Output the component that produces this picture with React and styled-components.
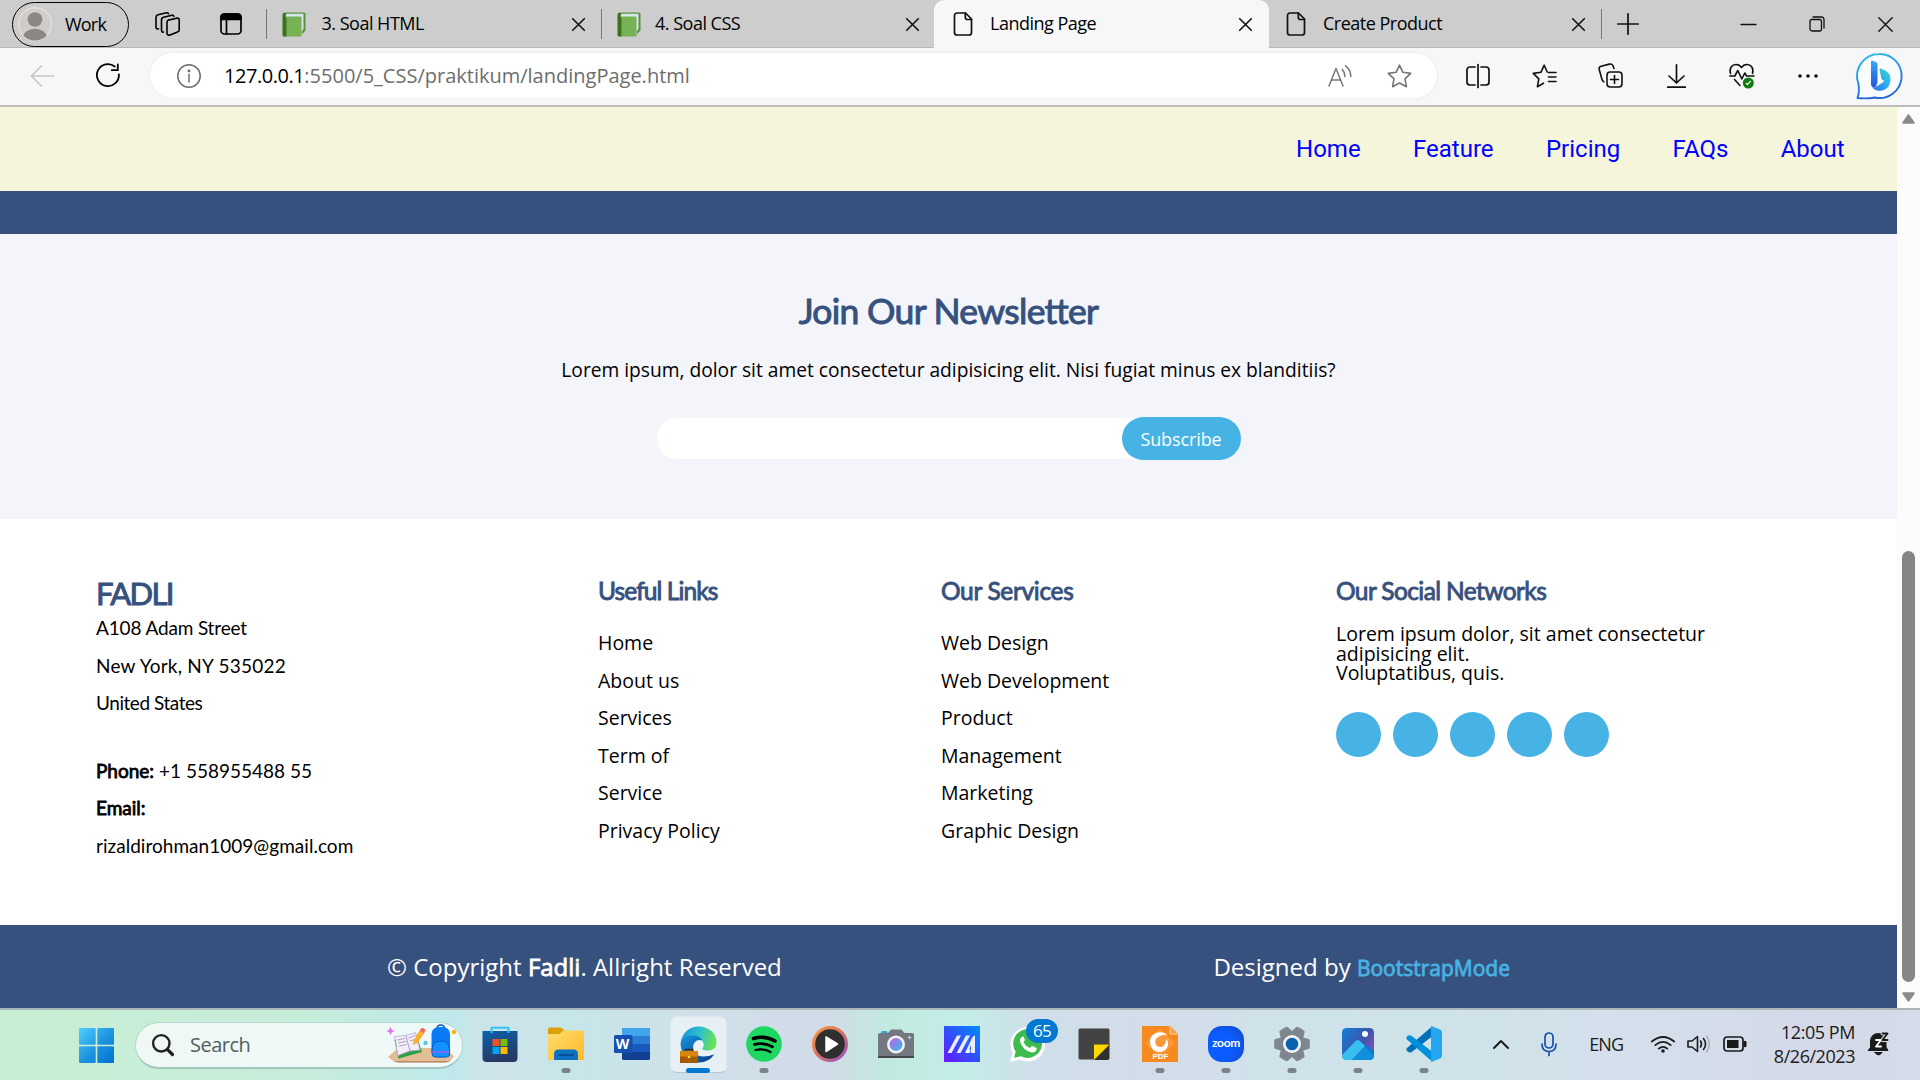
import React from 'react';
import styled, { createGlobalStyle, css } from 'styled-components';

const GlobalStyle = createGlobalStyle`
  * { box-sizing: border-box; }
  html, body { margin: 0; padding: 0; overflow: hidden; }
  ul, h1, h2, h3, p { margin: 0; padding: 0; list-style: none; font-weight: 400; }
`;

const UI = '"Open Sans", "Noto Sans", sans-serif';
const BODY = '"Open Sans", "Noto Sans", sans-serif';
const GEO = 'Lato, "Open Sans", sans-serif';
const NAVY = '#37517e';
const SKY = '#47b2e4';

const Screen = styled.div`
  display: flex;
  flex-direction: column;
  width: 1920px;
  height: 1080px;
  overflow: hidden;
  font-family: ${UI};
  background: #fff;
  color: #000;
`;

const Icon = styled.svg`
  display: block;
  flex: none;
  overflow: visible;
  fill: none;
  stroke: ${(p) => p.$stroke || 'none'};
  stroke-width: ${(p) => p.$weight || 1.5};
  stroke-linecap: round;
  stroke-linejoin: round;
`;

/* ---------- browser chrome ---------- */

const TabStrip = styled.header`
  display: flex;
  align-items: center;
  flex: none;
  height: 48px;
  padding-left: 12px;
  background: #cdcdcd;
  box-shadow: inset 0 -1px 0 #b9b9b9;
`;

const ProfilePill = styled.div`
  display: flex;
  align-items: center;
  gap: 13px;
  width: 117px;
  height: 45px;
  padding-left: 5px;
  border: 1.5px solid #000;
  border-radius: 23px;
  font-size: 18px;
  letter-spacing: -0.8px;
`;

const StripIcons = styled.div`
  display: flex;
  align-items: center;
  gap: 40px;
  padding: 0 24px 0 26px;
`;

const Divider = styled.span`
  flex: none;
  width: 1px;
  height: 30px;
  background: #767676;
`;

const Tab = styled.div`
  display: flex;
  align-items: center;
  flex: none;
  width: ${(p) => p.$w}px;
  height: 48px;
  padding: 0 ${(p) => p.$pr}px 0 ${(p) => p.$pl}px;
  ${(p) =>
    p.$active &&
    css`
      background: #f7f7f7;
      border-radius: 10px 10px 0 0;
    `}
`;

const TabTitle = styled.span`
  flex: 1;
  padding: 0 0 2px ${(p) => p.$gap || 16}px;
  font-size: 18px;
  line-height: 24px;
  letter-spacing: -0.5px;
  white-space: nowrap;
`;

const NewTab = styled.div`
  padding: 0 0 1px 15px;
`;

const WindowControls = styled.div`
  display: flex;
  align-items: center;
  gap: 53px;
  margin-left: auto;
  padding-right: 27px;
`;

const Toolbar = styled.div`
  display: flex;
  align-items: center;
  flex: none;
  height: 59px;
  padding: 0 18px 2px 30px;
  background: #f7f7f7;
  border-bottom: 2px solid #bdbdbd;
`;

const NavButtons = styled.div`
  display: flex;
  align-items: center;
  gap: 42px;
  padding-right: 30px;
`;

const AddressBar = styled.div`
  display: flex;
  align-items: center;
  width: 1287px;
  height: 45px;
  padding: 0 25px 0 27px;
  background: #fff;
  border-radius: 23px;
  box-shadow: 0 0 3px rgba(0, 0, 0, 0.08);
`;

const Url = styled.span`
  flex: 1;
  padding: 1px 0 0 23px;
  font-size: 20px;
  line-height: 28px;
  color: #6d6d6d;
`;

const Host = styled.span`
  color: #000;
  letter-spacing: -0.45px;
`;

const AddressActions = styled.div`
  display: flex;
  align-items: center;
  gap: 35px;
`;

const ToolbarActions = styled.div`
  display: grid;
  grid-template-columns: repeat(6, 66px) 1fr;
  align-items: center;
  justify-items: center;
  flex: 1;
  padding-left: 8px;

  & > :last-child { justify-self: end; }
`;

/* ---------- page ---------- */

const Viewport = styled.div`
  display: flex;
  flex: none;
  height: 901px;
`;

const Page = styled.main`
  display: flex;
  flex-direction: column;
  width: 1897px;
`;

const Scrollbar = styled.aside`
  display: flex;
  flex-direction: column;
  align-items: center;
  width: 23px;
  padding-top: 7px;
  background: #fcfcfc;
`;

const Thumb = styled.div`
  width: 13px;
  height: 431px;
  margin: 427px 0 10px;
  border-radius: 7px;
  background: #858585;
`;

const NavBar = styled.nav`
  display: flex;
  align-items: center;
  justify-content: flex-end;
  gap: 52.4px;
  flex: none;
  height: 84px;
  padding-right: 52.4px;
  background: #f5f5dc;
  font-family: Roboto, sans-serif;
`;

const NavLink = styled.a`
  color: #0000ff;
  font-size: 24px;
`;

const HeroEdge = styled.div`
  flex: none;
  height: 43px;
  background: ${NAVY};
`;

const Newsletter = styled.section`
  display: flex;
  flex-direction: column;
  align-items: center;
  flex: none;
  height: 285px;
  padding-top: 52.7px;
  background: #f3f5fa;
`;

const NewsTitle = styled.h2`
  font-family: ${GEO};
  font-size: 35.5px;
  line-height: 48px;
  letter-spacing: -0.7px;
  font-feature-settings: 'liga' 1;
  color: ${NAVY};
  -webkit-text-stroke: 1px ${NAVY};
`;

const NewsText = styled.p`
  margin-top: 22.8px;
  font-family: ${BODY};
  font-size: 19.2px;
  line-height: 26px;
`;

const SubscribeForm = styled.div`
  display: flex;
  align-items: center;
  justify-content: flex-end;
  width: 584px;
  height: 41px;
  margin-top: 35px;
  border-radius: 21px;
  background: #fff;
`;

const SubscribeButton = styled.button`
  flex: none;
  width: 119px;
  height: 43px;
  margin: -1px 0;
  padding: 1px 0 0;
  border: 0;
  border-radius: 22px;
  background: ${SKY};
  color: #fff;
  font-family: ${BODY};
  font-size: 18px;
  letter-spacing: -0.1px;
`;

const Footer = styled.section`
  display: grid;
  grid-template-columns: 502px 343px 395px 1fr;
  flex: none;
  height: 406px;
  padding: 56px 0 0 96px;
`;

const Brand = styled.h1`
  margin-top: 3px;
  font-family: ${GEO};
  font-size: 31px;
  line-height: 31px;
  letter-spacing: -1.6px;
  color: ${NAVY};
  -webkit-text-stroke: 1px ${NAVY};
`;

const Address = styled.div`
  font-family: ${GEO};
  font-size: 19px;
  line-height: 37.5px;
`;

const AddressLine = styled.p`
  margin-top: ${(p) => (p.$spaced ? 30 : 0)}px;
  letter-spacing: ${(p) => p.$ls || 0}px;
`;

const Strong = styled.span`
  -webkit-text-stroke: 0.8px currentColor;
`;

const ColumnTitle = styled.h3`
  margin: 0.7px 0 18.4px;
  font-family: ${GEO};
  font-size: 24.5px;
  line-height: 30px;
  letter-spacing: ${(p) => p.$ls || -0.4}px;
  color: ${NAVY};
  -webkit-text-stroke: 0.9px ${NAVY};
`;

const LinkList = styled.ul`
  font-family: ${BODY};
  font-size: 19.5px;
  line-height: 37.5px;
`;

const SocialText = styled.p`
  font-family: ${BODY};
  font-size: 19.5px;
  line-height: 19.5px;
`;

const SocialRow = styled.div`
  display: flex;
  gap: 12px;
  margin-top: 29.4px;
`;

const SocialDot = styled.span`
  width: 45px;
  height: 45px;
  border-radius: 50%;
  background: ${SKY};
`;

const CopyrightBar = styled.footer`
  display: flex;
  align-items: center;
  justify-content: space-between;
  flex: 1;
  padding: 0 387px;
  background: ${NAVY};
  color: #fff;
  font-family: ${BODY};
  font-size: 24px;
`;

const Designer = styled.span`
  color: ${SKY};
  font-size: 21px;
  -webkit-text-stroke: 0.8px currentColor;
`;

/* ---------- taskbar ---------- */

const Taskbar = styled.footer`
  display: flex;
  align-items: center;
  flex: 1;
  border-top: 2px solid #a9b6ba;
  background: linear-gradient(
    90deg,
    #c8efd3 0px, #c6ecda 300px, #bfe9eb 450px, #cee3e9 490px, #c6e6e8 570px,
    #d0dfe9 700px, #d0dce7 830px, #c1eadf 890px, #c3ede8 960px, #cfdfe9 1030px,
    #d4dce9 1160px, #cfe2ea 1270px, #cee3e8 1440px, #d5dfec 1640px, #d3d9e8 1800px, #d6dbe9 1920px
  );
`;

const StartButton = styled.div`
  padding: 0 21px 0 79px;
`;

const SearchBox = styled.div`
  display: flex;
  align-items: center;
  width: 328px;
  height: 47px;
  padding: 0 6px 0 16px;
  border: 1.5px solid #b4d8cf;
  border-bottom: 2px solid #a3c6bd;
  border-radius: 24px;
  background: linear-gradient(90deg, #eff8f3, #eefafa);
`;

const SearchLabel = styled.span`
  flex: 1;
  padding-left: 16px;
  font-size: 20px;
  letter-spacing: -0.5px;
  color: #565d5b;
`;

const AppRow = styled.div`
  display: flex;
  padding-left: 4px;
`;

const AppCell = styled.div`
  position: relative;
  display: flex;
  justify-content: center;
  align-items: center;
  width: 66px;
  height: 68px;
  padding-bottom: 2px;
`;

const ActivePlate = styled.div`
  display: flex;
  justify-content: center;
  align-items: center;
  width: 57px;
  height: 57px;
  border: 1px solid #dde7ec;
  border-bottom-color: #b9c6cc;
  border-radius: 7px;
  background: #e7f0f5;
`;

const Indicator = styled.span`
  position: absolute;
  left: 50%;
  bottom: 6px;
  width: ${(p) => (p.$active ? 24 : 9)}px;
  height: 5px;
  border-radius: 3px;
  transform: translateX(-50%);
  background: ${(p) => (p.$active ? '#0078d4' : '#7b8389')};
`;

const Badge = styled.span`
  position: absolute;
  left: 31px;
  top: 8px;
  width: 32px;
  height: 24px;
  border-radius: 12px;
  background: #0078d4;
  color: #fff;
  font-size: 17px;
  line-height: 23px;
  letter-spacing: -0.8px;
  text-align: center;
`;

const ZoomTile = styled.div`
  width: 36px;
  height: 36px;
  border-radius: 14px;
  background: radial-gradient(circle at 35% 55%, #0b5cff 40%, #1349c4 100%);
  color: #fff;
  font-family: ${GEO};
  font-size: 12px;
  font-weight: 700;
  line-height: 34px;
  letter-spacing: -0.3px;
  text-align: center;
`;

const WordLetter = styled.text`
  font: 700 14px ${UI};
  fill: #fff;
`;

const PdfLabel = styled.text`
  font: 700 8px "Liberation Sans", sans-serif;
  fill: #fff;
`;

const Tray = styled.div`
  display: flex;
  align-items: center;
  margin-left: auto;
  padding: 0 31px 2px 0;
  color: #1b1b1b;
  font-size: 18px;
`;

const TrayItem = styled.div`
  padding-left: ${(p) => p.$gap}px;
  letter-spacing: -1px;
`;

const Clock = styled.div`
  display: flex;
  flex-direction: column;
  align-items: flex-end;
  width: 121px;
  padding-right: 13px;
  padding-bottom: 1px;
  line-height: 24px;
  letter-spacing: -0.45px;
`;

/* ---------- icon drawings ---------- */

const Avatar = () => (
  <Icon width="34" height="34" viewBox="0 0 34 34">
    <clipPath id="av"><circle cx="17" cy="17" r="16.5" /></clipPath>
    <circle cx="17" cy="17" r="16.3" fill="#cfccc9" stroke="#e3e0dc" />
    <g clipPath="url(#av)" fill="#8b8784">
      <circle cx="17" cy="12.5" r="7.3" />
      <ellipse cx="17" cy="31" rx="12.2" ry="9.3" />
    </g>
  </Icon>
);
const Workspaces = () => (
  <Icon $stroke="#000" $weight={1.6} width="25" height="24" viewBox="0 0 25 24">
    <path d="M13 8.2 22 6.1Q24.2 5.600 24.2 7.800V18Q24.200 19.600 22.500 20L15 22.900Q12 23.900 12 21V10.500Q12 8.500 13.500 8.100Z" />
    <path d="M8.500 20Q6.500 20.500 6.500 18V8Q6.500 5.700 8.500 5.200L17 3.200Q18.500 3 18.800 4.200" />
    <path d="M3.500 16.800Q1 17.500 1 15V5.500Q1 3.300 3 2.800L11.500.8Q13 .5 13.500 1.700" />
  </Icon>
);
const VerticalTabs = () => (
  <Icon $stroke="#000" $weight={1.7} width="22" height="22" viewBox="0 0 22 22">
    <rect x="1" y="1" width="20" height="20" rx="3.500" />
    <path d="M1 6.500V4a3 3 0 0 1 3-3h14a3 3 0 0 1 3 3v2.500Z" fill="#000" />
    <path d="M6.500 7v14" />
  </Icon>
);
const Book = () => (
  <Icon width="24" height="25" viewBox="0 0 24 25">
    <path d="M4 .5h18a1.500 1.500 0 0 1 1.500 1.500v16.500L20 22V5H1Z" fill="#5c913b" />
    <path d="M4.500 1.800h17v15L19.500 20V5H3Z" fill="#d6e6ef" />
    <rect x="1" y="4.600" width="18.500" height="19.900" rx="1.200" fill="#77b255" />
    <path d="M2.500.5C1.200.7.500 2 .500 3.500V23A1.500 1.500 0 0 0 2 24.500h2.500V6C3 4.500 3 3 4.500 1.800Z" fill="#3e721d" />
  </Icon>
);
const FileIcon = () => (
  <Icon $stroke="#111" $weight={1.7} width="24" height="24" viewBox="0 0 24 24">
    <path d="M6 1h8.500l6 6v13.500a2.500 2.500 0 0 1-2.500 2.500H6a2.500 2.500 0 0 1-2.500-2.500v-17A2.500 2.500 0 0 1 6 1Z" />
    <path d="M14.300 1v4.500a2 2 0 0 0 2 2h4.200" />
  </Icon>
);
const Cross = ({ size = 13, weight = 1.6 }) => (
  <Icon $stroke="#111" $weight={weight} width={size} height={size} viewBox="0 0 13 13">
    <path d="M.7.7l11.600 11.600M12.300.7.7 12.300" />
  </Icon>
);
const Plus = () => (
  <Icon $stroke="#111" $weight={1.7} width="22" height="22" viewBox="0 0 22 22"><path d="M11 .8v20.400M.8 11h20.400" /></Icon>
);
const Minimize = () => (
  <Icon $stroke="#111" $weight={1.4} width="15" height="15" viewBox="0 0 15 15"><path d="M0 7.500h15" /></Icon>
);
const Restore = () => (
  <Icon $stroke="#111" $weight={1.3} width="16" height="16" viewBox="0 0 16 16">
    <rect x="1" y="3.500" width="11.500" height="11.500" rx="2" />
    <path d="M4 1h8.500A2.500 2.500 0 0 1 15 3.500V12" />
  </Icon>
);
const Back = () => (
  <Icon $stroke="#c6c6c6" $weight={1.6} width="24" height="22" viewBox="0 0 24 22"><path d="M11.500 1 1.300 11l10.200 10M1.500 11h22" /></Icon>
);
const Reload = () => (
  <Icon $stroke="#000" $weight={1.8} width="24" height="24" viewBox="0 0 24 24">
    <path d="M18.800 2.500A11 11 0 1 0 22.900 10.500" /><path d="M21.800.5v5.700h-6" />
  </Icon>
);
const Info = () => (
  <Icon $stroke="#6b6b6b" $weight={1.5} width="24" height="24" viewBox="0 0 24 24">
    <circle cx="12" cy="12" r="11.200" /><path d="M12 10.500V18" /><circle cx="12" cy="7" r=".7" fill="#6b6b6b" />
  </Icon>
);
const ReadAloud = () => (
  <Icon $stroke="#767676" $weight={1.5} width="24" height="22" viewBox="0 0 24 22">
    <path d="M1 21 8 3.500 15 21M3.500 15h9" />
    <path d="M14.200 4.500Q17 7.500 16.800 11.500M17.500.8Q22.700 4.500 22.800 11.500" />
  </Icon>
);
const Star = () => (
  <Icon $stroke="#767676" $weight={1.6} width="25" height="24" viewBox="0 0 25 24">
    <path d="M12.500 1.200 15.900 8.300 23.700 9.400 18 14.900 19.400 22.700 12.500 19 5.600 22.700 7 14.900 1.300 9.400 9.100 8.300Z" />
  </Icon>
);
const Split = () => (
  <Icon $stroke="#111" $weight={1.7} width="24" height="24" viewBox="0 0 24 24">
    <path d="M12 .5v23M9 3H4a3 3 0 0 0-3 3v12a3 3 0 0 0 3 3h5M15 3h5a3 3 0 0 1 3 3v12a3 3 0 0 1-3 3h-5" />
  </Icon>
);
const Favorites = () => (
  <Icon $stroke="#111" $weight={1.6} width="25" height="24" viewBox="0 0 25 24">
    <path d="M16.500 8.500H24M16.500 13H24M16.500 17.500H24" />
    <path d="M15.200 8 12.200 1.200 8.900 8.300 1.300 9.400 6.800 14.900 5.400 22.700 11.500 19.200" />
  </Icon>
);
const Collections = () => (
  <Icon $stroke="#111" $weight={1.6} width="25" height="25" viewBox="0 0 25 25">
    <rect x="9" y="9" width="15" height="15" rx="3.200" />
    <path d="M16.500 12.500v8M12.500 16.500h8" />
    <path d="M5.800 18.800Q4.400 18 4 16.500L1.200 6.500Q.6 4 3 3.200L11.500 1.100Q14 .5 15 2.800L16 5.500" />
  </Icon>
);
const Download = () => (
  <Icon $stroke="#111" $weight={1.7} width="25" height="24" viewBox="0 0 25 24"><path d="M12.500.8v17.800M5 12l7.500 7 7.500-7M3.700 23.200h17.600" /></Icon>
);
const Health = () => (
  <Icon $stroke="#111" $weight={1.6} width="26" height="26" viewBox="0 0 26 26">
    <path d="M1.500 10.500C0 5 3 1.500 7 1.500q3.500 0 5.500 3 2-3 5.500-3c4 0 7 3.500 5.500 9M.8 13h5l3-5.500 4 8.500 3-6 1.800 3H25M5.500 16.500l5.500 6" />
    <circle cx="19.300" cy="20" r="5.500" fill="#107c10" stroke="none" />
    <path d="m17.300 20.500 1.200 1.200 2.800-3.400" stroke="#fff" strokeWidth="1.200" />
  </Icon>
);
const Dots = () => (
  <Icon width="22" height="6" viewBox="0 0 22 6">
    <g fill="#111"><circle cx="3" cy="3" r="1.800" /><circle cx="11" cy="3" r="1.800" /><circle cx="19" cy="3" r="1.800" /></g>
  </Icon>
);
const Bing = () => (
  <Icon width="46" height="46" viewBox="0 0 46 46">
    <defs>
      <linearGradient id="bo" x1="0" y1="0" x2="0.300" y2="1"><stop stopColor="#2cc4ea" /><stop offset="1" stopColor="#2566d8" /></linearGradient>
      <linearGradient id="bs" x1="0" y1="0" x2="0" y2="1"><stop stopColor="#3aa8f5" /><stop offset="1" stopColor="#2252dc" /></linearGradient>
      <linearGradient id="bt" x1="1" y1="0" x2="0" y2="1"><stop stopColor="#39e0c4" /><stop offset=".5" stopColor="#2fa6f4" /><stop offset="1" stopColor="#2a6cf0" /></linearGradient>
    </defs>
    <path d="M23 1a22 22 0 1 1-4 43.500Q10 46 1.500 45 4 38 2.200 30A22 22 0 0 1 23 1Z" fill="#f8fcff" stroke="url(#bo)" strokeWidth="1.900" />
    <path d="M23.500 16.500q0-1.500 1.500-1l5 2.500q5 3 4.500 9.500-1 9-10 10.300-6 .5-8.500-4.300 1.500 1.500 4 .2l7.500-4.700q1-.8 0-1.500l-2-1.500Z" fill="url(#bt)" />
    <path d="M15 9q0-1.800 1.700-1.200l3.500 1.500q1.300.7 1.300 2.200V29l-1.500 4.500q-4.500 2-5-2Z" fill="url(#bs)" />
  </Icon>
);
const Triangle = ({ down }) => (
  <Icon $stroke="#8a8a8a" $weight={2} width="13" height="10" viewBox="0 0 13 10">
    <path d={down ? 'M1.200 1.200h10.600L6.500 8.800Z' : 'M1.200 8.800h10.600L6.500 1.200Z'} fill="#8a8a8a" />
  </Icon>
);

const Windows = () => (
  <Icon width="35" height="35" viewBox="0 0 35 35">
    <linearGradient id="wn" gradientUnits="userSpaceOnUse" x1="0" y1="0" x2="35" y2="35"><stop stopColor="#4fd0ff" /><stop offset=".5" stopColor="#1f97e0" /><stop offset="1" stopColor="#0070d2" /></linearGradient>
    <g fill="url(#wn)"><rect width="16.700" height="16.700" rx="1" /><rect x="18.300" width="16.700" height="16.700" rx="1" /><rect y="18.300" width="16.700" height="16.700" rx="1" /><rect x="18.300" y="18.300" width="16.700" height="16.700" rx="1" /></g>
  </Icon>
);
const Magnifier = () => (
  <Icon $stroke="#222" $weight={2.400} width="22" height="22" viewBox="0 0 22 22"><circle cx="9.300" cy="9.300" r="8.200" /><path d="m15.300 15.300 5.200 5.200" strokeWidth="3.200" /></Icon>
);
const SchoolArt = () => (
  <Icon width="70" height="37" viewBox="0 0 70 37">
    <path d="M2 31 12 22h46l10 8-4 5.500q-2 1-6 1H12Q8 36.500 6 34Z" fill="#e3bd95" />
    <path d="M8 35h56l-4 1.500H12Z" fill="#b98b66" />
    <path d="m8.500 14 22-5 5.500 17-23.500 6.500Z" fill="#2f9e44" />
    <path d="M9 10.500 20 9.500l9.500-3 4.500 17.500-10.500 1-11.500 4.500Z" fill="#f3eefa" stroke="#b8a9cf" strokeWidth=".8" />
    <path d="m20 10 4 15M11.500 14l7-1.500M12.500 17l7-1.500M13.500 20l7-1.500M23 12l6-2.500M24 15l6-2" stroke="#9a8cb5" strokeWidth=".8" />
    <path d="m27.500 14.500 6-10 4.500 3-6.500 9.500-4.500 2Z" fill="#fbb02d" /><path d="m33.500 4.500 2-2.500q2.500-.5 4 2l-1.500 3.500Z" fill="#f0695a" />
    <path d="m4.500 1 1.300 2.700L8.500 5 5.800 6.300 4.500 9 3.200 6.300.5 5l2.700-1.300Z" fill="#e06ff5" />
    <circle cx="39.500" cy="17" r="2.200" fill="#5ac8e8" /><circle cx="68" cy="6" r="2.200" fill="#ffb300" />
    <path d="M51 3q0-4 3.800-4T58.500 3" stroke="#1457b8" strokeWidth="1.500" />
    <rect x="45.500" y="1" width="18.500" height="30.500" rx="7" fill="#0a7bf5" />
    <path d="M46 24q0-9 8.800-9t8.800 9v4q0 3-3 3H49q-3 0-3-3Z" fill="#1092ff" stroke="#0752c0" strokeWidth=".9" />
    <path d="M46.500 26h16.500" stroke="#a35cf5" strokeWidth="1.500" />
  </Icon>
);
const Store = () => (
  <Icon width="36" height="36" viewBox="0 0 36 36">
    <linearGradient id="st" x1="0" y1="0" x2=".3" y2="1"><stop stopColor="#0c60ab" /><stop offset="1" stopColor="#263a63" /></linearGradient>
    <path d="M.5 5h35v27q0 4-4 4h-27q-4 0-4-4Z" fill="url(#st)" />
    <path d="M9.500 7V1.800h17V7" stroke="#2fc4f4" strokeWidth="2" strokeLinecap="butt" />
    <rect x="10.500" y="13" width="7" height="7" fill="#f25022" /><rect x="18.500" y="13" width="7" height="7" fill="#7fba00" /><rect x="10.500" y="21" width="7" height="7" fill="#00a4ef" /><rect x="18.500" y="21" width="7" height="7" fill="#ffb900" />
  </Icon>
);
const Explorer = () => (
  <Icon width="36" height="34" viewBox="0 0 36 34">
    <linearGradient id="fx" x1="0" y1="0" x2="1" y2="1"><stop stopColor="#ffdc72" /><stop offset="1" stopColor="#fdbb25" /></linearGradient>
    <path d="M0 2q0-1.500 1.500-1.500H12q2 0 3.500 2L17 4v4H0Z" fill="#dda00d" />
    <path d="M0 7h11.500l4-3.500H34.500Q36 3.500 36 5v26.500q0 1.500-1.500 1.500h-33Q0 33 0 31.500Z" fill="url(#fx)" />
    <path d="M6 33v-6q0-4.500 4.500-4.500h15q4.500 0 4.500 4.500v6Z" fill="#0b72c4" /><path d="M11 28h14" stroke="#0a4e94" strokeWidth="2" />
  </Icon>
);
const Word = () => (
  <Icon width="36" height="34" viewBox="0 0 36 34">
    <rect x="8" y="1" width="28" height="32" rx="1.500" fill="#103f91" /><path d="M8 2.500Q8 1 9.500 1h25Q36 1 36 2.500V9H8Z" fill="#41a5ee" /><path d="M8 9h28v8H8Z" fill="#2b7cd3" /><path d="M8 17h28v8H8Z" fill="#185abd" />
    <rect y="8" width="18.500" height="18" rx="1.500" fill="#1450b0" /><WordLetter x="1.800" y="22">W</WordLetter>
  </Icon>
);
const Edge = () => (
  <Icon width="37" height="37" viewBox="0 0 37 37">
    <defs>
      <linearGradient id="e1" x1="0" y1=".3" x2="1" y2=".5"><stop stopColor="#1b8fd6" /><stop offset=".5" stopColor="#2bc0cf" /><stop offset="1" stopColor="#6ee34f" /></linearGradient>
      <linearGradient id="e2" x1="0" y1="0" x2="1" y2="1"><stop stopColor="#1593df" /><stop offset="1" stopColor="#0b3f86" /></linearGradient>
    </defs>
    <path d="M.5 18C1.500 7 9 .5 18.500.5 29 .5 36.500 7.500 36.500 16q0 8.500-8.500 8.500-6.500 0-6-3 2.500-2.500 1-5.500-3-5.500-11-5-8.500 1-11.500 7Z" fill="url(#e1)" />
    <path d="M.5 18Q3 9.500 12 9.500q8 0 10.500 5-5-1.500-8 2-3 4.500 0 9.500 5 8 20 2Q29 36.500 19 36.500 2 36 .500 18Z" fill="url(#e2)" />
    <path d="M22 15q-6 0-7.500 5 0 6 7.500 9 6 2 12.500-1 1-2.500-1.500-2-9 2-11-3 3-3 0-8Z" fill="#eaf4f8" />
    <path d="M5.500 25.500v-2h7v2" stroke="#4a2a08" strokeWidth="1.500" />
    <rect y="25" width="18" height="12" fill="#a55a00" /><path d="M0 25h18v5.500H0Z" fill="#d9860c" /><circle cx="9" cy="31" r="1.300" fill="#ffe04a" />
  </Icon>
);
const Spotify = () => (
  <Icon width="36" height="36" viewBox="0 0 36 36">
    <circle cx="18" cy="18" r="17.800" fill="#1ed760" />
    <g stroke="#000"><path d="M7.500 12.500q11-3.500 21.500 2.500" strokeWidth="3.600" /><path d="M8.500 18.500q9.500-2.500 18 2.300" strokeWidth="2.900" /><path d="M9.500 24q8-2 15 2" strokeWidth="2.300" /></g>
  </Icon>
);
const Media = () => (
  <Icon width="36" height="36" viewBox="0 0 36 36">
    <linearGradient id="mp" x1="0" y1="0" x2="1" y2="1"><stop stopColor="#ff9a3d" /><stop offset=".45" stopColor="#e0745f" /><stop offset="1" stopColor="#8b4fd0" /></linearGradient>
    <circle cx="18" cy="18" r="18" fill="url(#mp)" /><circle cx="18" cy="18" r="14.800" fill="#2f2f2f" /><path d="M14 11v14.500L25.500 18Z" fill="#fff" stroke="#fff" />
  </Icon>
);
const Camera = () => (
  <Icon width="36" height="30" viewBox="0 0 36 30">
    <linearGradient id="cm" x1="0" y1="0" x2="1" y2="1"><stop stopColor="#c95bdf" /><stop offset="1" stopColor="#28c4f5" /></linearGradient>
    <path d="M3 6V3.500Q3 2 4.500 2H8q1.500 0 1.500 1.500V6Z" fill="#27a7e0" />
    <path d="M0 6q0-2 2-2h8l3-3.500h10.500l3 3.500H34q2 0 2 2v23H0Z" fill="#737880" /><path d="M0 27h36v2H0Z" fill="#43474d" />
    <circle cx="18" cy="15.500" r="9" fill="#f3f3f6" /><circle cx="18" cy="15.500" r="6.500" fill="url(#cm)" /><path d="M31.500 7v3M30 8.500h3" stroke="#c8cdd2" strokeWidth="1" />
  </Icon>
);
const MyAsus = () => (
  <Icon width="36" height="36" viewBox="0 0 36 36">
    <linearGradient id="ma" x1="1" y1="0" x2="0" y2="1"><stop stopColor="#008dff" /><stop offset=".5" stopColor="#2d52fb" /><stop offset="1" stopColor="#6a17ff" /></linearGradient>
    <rect width="36" height="36" fill="url(#ma)" />
    <path d="M3.500 27 13 9.500h4L7.500 27ZM12.500 27 22 9.500h4L16.500 27ZM21 27 28 12q1-2.500 3-2.500V27H27V19l-3 8Z" fill="#eeeaff" /><circle cx="24.500" cy="25" r="2" fill="#fff" />
  </Icon>
);
const WhatsApp = () => (
  <Icon width="36" height="36" viewBox="0 0 36 36">
    <path d="M0 36 2.500 26.500A17.300 17.300 0 1 1 9.500 33.500Z" fill="#fff" />
    <path d="m4.200 31.800 1.500-6.200A14.400 14.400 0 1 1 10.800 30.200Z" fill="#3dbb4c" />
    <path d="M12.500 10.500q-3 1.500-2.500 5 2.500 8.500 11.500 11 4 .5 5-3v-1.500l-4.500-2.200-2 2.200q-4.500-1.500-6.500-6l1.500-2-1.500-3.500Z" fill="#fff" />
  </Icon>
);
const Sticky = () => (
  <Icon width="32" height="32" viewBox="0 0 32 32"><path d="M.5 2Q.5.500 2 .500h28q1.500 0 1.500 1.500v14.500L16.500 31.500H2q-1.500 0-1.500-1.500Z" fill="#434343" /><path d="M16 32V16h15.500v14.500L30 32Z" fill="#303030" /><path d="M16 32V16.500h15.500Z" fill="#ffd800" /></Icon>
);
const Foxit = () => (
  <Icon width="36" height="36" viewBox="0 0 36 36">
    <path d="M0 0h28l8 8v28H0Z" fill="#f68a1f" /><path d="M28 0v8h8" fill="#f9a04a" stroke="#fdd3a2" strokeWidth="1" /><path d="m18 3 15 14-15 15L3 17Z" fill="#fba552" opacity=".55" />
    <path d="M25.500 8.500Q21 5.500 15.500 6.500 8 8.500 8 16q.5 8.500 8.500 10Q24 26.500 26 19.500q.5-4-2-6.500.5 5-3.500 7.500-4 1.500-6.500-1.500-2-4.500 1.500-7.500 4-3 10-3Z" fill="#fff" /><PdfLabel x="10.500" y="33">PDF</PdfLabel>
  </Icon>
);
const Settings = () => {
  const teeth = [0, 60, 120, 180, 240, 300];
  return (
    <Icon width="36" height="36" viewBox="0 0 36 36">
      <g fill="#7f878e">
        <circle cx="18" cy="18" r="13.200" />
        {teeth.map((a) => <path key={a} d="M28 11.200 34.500 13q1 .3 1.200 1.500.5 3.500 0 7-.2 1.200-1.200 1.500L28 24.800Z" transform={`rotate(${a} 18 18)`} />)}
      </g>
      <circle cx="18" cy="18" r="9" fill="#f2f4f6" /><circle cx="18" cy="18" r="6.300" fill="#0b63b0" />
    </Icon>
  );
};
const Photos = () => (
  <Icon width="32" height="32" viewBox="0 0 32 32">
    <linearGradient id="ph" x1="0" y1="0" x2="1" y2=".7"><stop stopColor="#1480d8" /><stop offset=".6" stopColor="#3a56b0" /><stop offset="1" stopColor="#8a4fb8" /></linearGradient>
    <clipPath id="pc"><rect width="32" height="32" rx="4.500" /></clipPath>
    <g clipPath="url(#pc)"><rect width="32" height="32" fill="url(#ph)" /><path d="M12 34 23 17.500q1.500-1.500 3 0L34 25v9Z" fill="#1276cf" /><path d="M-2 29 13.500 13q2-2 4.500 0l5 5L8 34H0Z" fill="#35c0ef" /><path d="m8 34 15-15 11 11v4Z" fill="#0e90dc" /></g>
    <circle cx="23" cy="6" r="3" fill="#fff" />
  </Icon>
);
const VsCode = () => (
  <Icon width="36" height="36" viewBox="0 0 36 36">
    <path d="M1 22 26 .5V10.500L5 26.500Q3.500 27 1 25Q-.500 23.500 1 22Z" fill="#0070b8" /><path d="M1 13.500Q-.500 12 1 10.500 3 8.500 5 9.500L26 25.500v10Z" fill="#0090dc" /><path d="M26 .300 34 3.500q2 1 2 3v23q0 2-2 3l-8 3.200Q25 36 25 35V1Q25 0 26 .300Z" fill="#25a6f2" />
  </Icon>
);

const Chevron = () => <Icon $stroke="#1b1b1b" $weight={2} width="16" height="9" viewBox="0 0 16 9"><path d="m1 8 7-7 7 7" /></Icon>;
const Mic = () => <Icon $stroke="#1550a5" $weight={1.700} width="16" height="24" viewBox="0 0 16 24"><rect x="4" y="1" width="8" height="15" rx="4" /><path d="M1 12q0 7.500 7 7.500t7-7.500M8 19.500V23.500" /></Icon>;
const Wifi = () => <Icon $stroke="#1b1b1b" $weight={1.700} width="24" height="17" viewBox="0 0 24 17"><path d="M.8 5.500q11.200-9 22.400 0M4.300 9.200q7.700-6.500 15.400 0M7.700 12.600q4.300-3.600 8.600 0" /><circle cx="12" cy="15" r="1.800" fill="#1b1b1b" stroke="none" /></Icon>;
const Speaker = () => <Icon $stroke="#1b1b1b" $weight={1.600} width="24" height="18" viewBox="0 0 24 18"><path d="M1 6v6h4l5.500 4.500v-15L5 6ZM13.500 6q2 3 0 6M16.500 3.500q4 5.500 0 11" /><path d="M19.500 1q5.500 8 0 16" stroke="#aeb3bd" /></Icon>;
const Battery = () => <Icon $stroke="#1b1b1b" $weight={1.700} width="24" height="16" viewBox="0 0 24 16"><rect x="1" y="1" width="19" height="14" rx="3" /><rect x="4" y="4" width="11.500" height="8" fill="#1b1b1b" stroke="none" /><path d="M22 6.300v3.400" strokeWidth="3" /></Icon>;
const Snooze = () => <Icon $stroke="#1b1b1b" $weight={1} width="21" height="24" viewBox="0 0 21 24"><path d="M2.500 15V9Q3 1.500 10.500 1.500T18 9v6l2 3.500H.5Z" fill="#1b1b1b" /><path d="M7 20.500h7q-3.500 5-7 0Z" fill="#1b1b1b" /><path d="M8 8h5l-5 6.500h5" stroke="#fff" strokeWidth="1.800" /><path d="M14.500 1.500h5l-5 6.500h5" stroke="#d6dbe9" strokeWidth="4" /><path d="M14.500 1.500h5l-5 6.500h5" strokeWidth="1.900" /></Icon>;

/* ---------- data ---------- */

const navLinks = ['Home', 'Feature', 'Pricing', 'FAQs', 'About'];
const usefulLinks = ['Home', 'About us', 'Services', 'Term of', 'Service', 'Privacy Policy'];
const services = ['Web Design', 'Web Development', 'Product', 'Management', 'Marketing', 'Graphic Design'];
const apps = [
  { id: 'store', Art: Store },
  { id: 'explorer', Art: Explorer, open: true },
  { id: 'word', Art: Word },
  { id: 'edge', Art: Edge, active: true },
  { id: 'spotify', Art: Spotify, open: true },
  { id: 'media', Art: Media },
  { id: 'camera', Art: Camera },
  { id: 'myasus', Art: MyAsus },
  { id: 'whatsapp', Art: WhatsApp, badge: '65' },
  { id: 'sticky', Art: Sticky },
  { id: 'foxit', Art: Foxit, open: true },
  { id: 'zoom', Art: () => <ZoomTile>zoom</ZoomTile>, open: true },
  { id: 'settings', Art: Settings, open: true },
  { id: 'photos', Art: Photos, open: true },
  { id: 'vscode', Art: VsCode, open: true },
];

export default function App() {
  return (
    <Screen>
      <GlobalStyle />
      <TabStrip>
        <ProfilePill><Avatar />Work</ProfilePill>
        <StripIcons><Workspaces /><VerticalTabs /></StripIcons>
        <Divider />
        <Tab $w={334} $pl={15} $pr={16}><Book /><TabTitle $gap={15.5}>3. Soal HTML</TabTitle><Cross /></Tab>
        <Divider />
        <Tab $w={332} $pl={15} $pr={15}><Book /><TabTitle $gap={14}>4. Soal CSS</TabTitle><Cross /></Tab>
        <Tab $w={335} $pl={17} $pr={17} $active><FileIcon /><TabTitle $gap={15}>Landing Page</TabTitle><Cross /></Tab>
        <Tab $w={332} $pl={15} $pr={16}><FileIcon /><TabTitle $gap={15}>Create Product</TabTitle><Cross /></Tab>
        <Divider />
        <NewTab><Plus /></NewTab>
        <WindowControls><Minimize /><Restore /><Cross size={15} weight={1.2} /></WindowControls>
      </TabStrip>

      <Toolbar>
        <NavButtons><Back /><Reload /></NavButtons>
        <AddressBar>
          <Info />
          <Url><Host>127.0.0.1</Host>:5500/5_CSS/praktikum/landingPage.html</Url>
          <AddressActions><ReadAloud /><Star /></AddressActions>
        </AddressBar>
        <ToolbarActions>
          <Split /><Favorites /><Collections /><Download /><Health /><Dots /><Bing />
        </ToolbarActions>
      </Toolbar>

      <Viewport>
        <Page>
          <NavBar>{navLinks.map((l) => <NavLink key={l}>{l}</NavLink>)}</NavBar>
          <HeroEdge />
          <Newsletter>
            <NewsTitle>Join Our Newsletter</NewsTitle>
            <NewsText>Lorem ipsum, dolor sit amet consectetur adipisicing elit. Nisi fugiat minus ex blanditiis?</NewsText>
            <SubscribeForm><SubscribeButton>Subscribe</SubscribeButton></SubscribeForm>
          </Newsletter>
          <Footer>
            <div>
              <Brand>FADLI</Brand>
              <Address>
                <AddressLine $ls={-0.15}>A108 Adam Street</AddressLine>
                <AddressLine $ls={0.22}>New York, NY 535022</AddressLine>
                <AddressLine $ls={-0.45}>United States</AddressLine>
                <AddressLine $spaced><Strong>Phone:</Strong> +1 558955488 55</AddressLine>
                <AddressLine><Strong>Email:</Strong></AddressLine>
                <AddressLine $ls={0.03}>rizaldirohman1009@gmail.com</AddressLine>
              </Address>
            </div>
            <div>
              <ColumnTitle $ls={-0.9}>Useful Links</ColumnTitle>
              <LinkList>{usefulLinks.map((l) => <li key={l}>{l}</li>)}</LinkList>
            </div>
            <div>
              <ColumnTitle $ls={-0.33}>Our Services</ColumnTitle>
              <LinkList>{services.map((l) => <li key={l}>{l}</li>)}</LinkList>
            </div>
            <div>
              <ColumnTitle $ls={-0.6}>Our Social Networks</ColumnTitle>
              <SocialText>
                Lorem ipsum dolor, sit amet consectetur<br />adipisicing elit.<br />Voluptatibus, quis.
              </SocialText>
              <SocialRow>{[0, 1, 2, 3, 4].map((n) => <SocialDot key={n} />)}</SocialRow>
            </div>
          </Footer>
          <CopyrightBar>
            <span>© Copyright <Strong>Fadli</Strong>. Allright Reserved</span>
            <span>Designed by <Designer>BootstrapMode</Designer></span>
          </CopyrightBar>
        </Page>
        <Scrollbar><Triangle /><Thumb /><Triangle down /></Scrollbar>
      </Viewport>

      <Taskbar>
        <StartButton><Windows /></StartButton>
        <SearchBox><Magnifier /><SearchLabel>Search</SearchLabel><SchoolArt /></SearchBox>
        <AppRow>
          {apps.map(({ id, Art, open, active, badge }) => (
            <AppCell key={id}>
              {active ? <ActivePlate><Art /></ActivePlate> : <Art />}
              {(open || active) && <Indicator $active={active} />}
              {badge && <Badge>{badge}</Badge>}
            </AppCell>
          ))}
        </AppRow>
        <Tray>
          <Chevron />
          <TrayItem $gap={32}><Mic /></TrayItem>
          <TrayItem $gap={32}>ENG</TrayItem>
          <TrayItem $gap={28}><Wifi /></TrayItem>
          <TrayItem $gap={12}><Speaker /></TrayItem>
          <TrayItem $gap={12}><Battery /></TrayItem>
          <Clock><span>12:05 PM</span><span>8/26/2023</span></Clock>
          <Snooze />
        </Tray>
      </Taskbar>
    </Screen>
  );
}
